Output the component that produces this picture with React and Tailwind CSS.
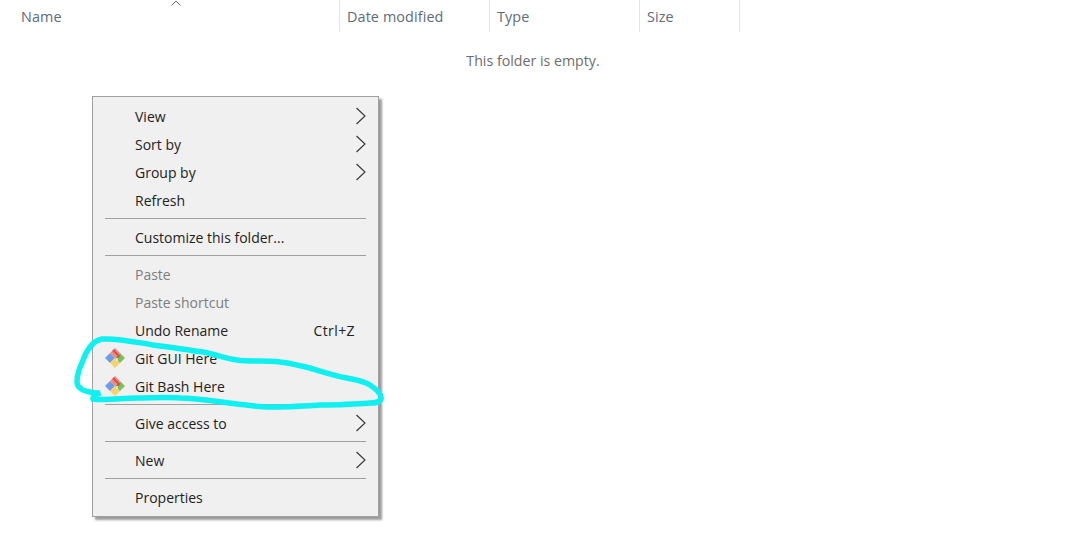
import React from 'react';

const columns = [
  { label: 'Name', width: 'w-[340px]', pad: 'pl-[21px]' },
  { label: 'Date modified', width: 'w-[150px]', pad: 'pl-[7px]' },
  { label: 'Type', width: 'w-[150px]', pad: 'pl-[7px]' },
  { label: 'Size', width: 'w-[100px]', pad: 'pl-[7px]' },
];

const menu = [
  { label: 'View', arrow: true },
  { label: 'Sort by', arrow: true },
  { label: 'Group by', arrow: true },
  { label: 'Refresh' },
  { sep: true },
  { label: 'Customize this folder...' },
  { sep: true },
  { label: 'Paste', disabled: true },
  { label: 'Paste shortcut', disabled: true },
  { label: 'Undo Rename', shortcut: 'Ctrl+Z' },
  { label: 'Git GUI Here', git: true },
  { label: 'Git Bash Here', git: true },
  { sep: true },
  { label: 'Give access to', arrow: true },
  { sep: true },
  { label: 'New', arrow: true },
  { sep: true },
  { label: 'Properties' },
];

function GitIcon() {
  return (
    <svg width="22" height="22" viewBox="0 0 22 22">
      <polygon points="11,11 6,6 1,11 6,16" fill="#6f9bea" />
      <polygon points="11,11 6,16 11,21 16,16" fill="#f7d468" />
      <polygon points="11,11 16,16 21,11 16,6" fill="#7cc05f" />
      <polygon points="11,11 6,6 11,1 16,6" fill="#ee8a84" />
      <path d="M9 3 L15 9 L13 11" fill="none" stroke="#d84f4a" strokeWidth="2" />
      <path d="M13 11 L13 14" fill="none" stroke="#f2f2f2" strokeWidth="1.4" />
    </svg>
  );
}

function Chevron() {
  return (
    <svg width="12" height="18" viewBox="0 0 12 18" className="ml-auto">
      <path d="M2.5 1 L11 9 L2.5 17" fill="none" stroke="#333333" strokeWidth="1.1" />
    </svg>
  );
}

function App() {
  return (
    <div className="relative w-[1066px] h-[560px] overflow-hidden bg-white font-['Open_Sans','Noto_Sans',sans-serif] text-[14px]">
      {/* header */}
      <div className="flex h-8">
        {columns.map((c) => (
          <div
            key={c.label}
            className={`${c.width} ${c.pad} relative flex items-center border-r border-[#e5e5e5] pt-[2px] text-[14.4px] tracking-[0.1px] text-[#5f6b78]`}
          >
            {c.label}
          </div>
        ))}
      </div>
      <svg width="12" height="7" viewBox="0 0 12 7" className="absolute left-[170px] top-0">
        <path d="M1.5 5.5 L6 1 L10.5 5.5" fill="none" stroke="#6b6b6b" strokeWidth="1" />
      </svg>

      <p className="mt-[19px] text-center text-[14.2px] leading-5 text-[#6d6d6d]">This folder is empty.</p>

      {/* context menu */}
      <div className="absolute left-[92px] top-[96px] w-[287px] border border-[#a0a0a0] bg-[#f0f0f0] py-[5px] text-[#222222] shadow-[3px_3px_2px_rgba(90,90,90,0.6)]">
        {menu.map((item, i) =>
          item.sep ? (
            <div key={i} className="flex h-[9px] items-center px-3">
              <div className="h-px w-full bg-[#a0a0a0]" />
            </div>
          ) : (
            <div
              key={i}
              className={`flex h-7 items-center pl-[11px] pr-3 ${item.disabled ? 'text-[#7d7d7d]' : ''}`}
            >
              <span className="flex h-full w-[31px] shrink-0 items-center">{item.git && <GitIcon />}</span>
              <span>{item.label}</span>
              {item.shortcut && <span className="ml-auto mr-[11px] tracking-[0.4px]">{item.shortcut}</span>}
              {item.arrow && <Chevron />}
            </div>
          )
        )}
      </div>

      {/* hand drawn marker */}
      <svg width="1066" height="560" viewBox="0 0 1066 560" className="pointer-events-none absolute left-0 top-0">
        <path
          d="M102 339 C118 338 135 342 153 345 C170 347 187 350 203 352 C215 354 226 359 237 360 C252 362 266 360 280 362 C291 363 300 366 310 368 C323 372 335 376 347 378 C356 380 364 381 370 385 C376 389 382 394 381 399 C379 403 375 403 370 403 C353 404 337 405 320 405 C303 406 287 407 270 407 C259 407 248 405 237 404 C218 402 199 398 180 398 C166 397 151 398 137 398 C122 398 106 401 93 399 C92 396 98 394 100 393 C94 393 88 392 83 390 C79 388 77 386 77 382 C77 375 79 369 82 363 C84 357 87 351 90 347 C93 343 97 340 102 339"
          fill="none"
          stroke="#0ff0f0"
          strokeWidth="5.5"
          strokeLinecap="round"
        />
      </svg>
    </div>
  );
}

export default App;
